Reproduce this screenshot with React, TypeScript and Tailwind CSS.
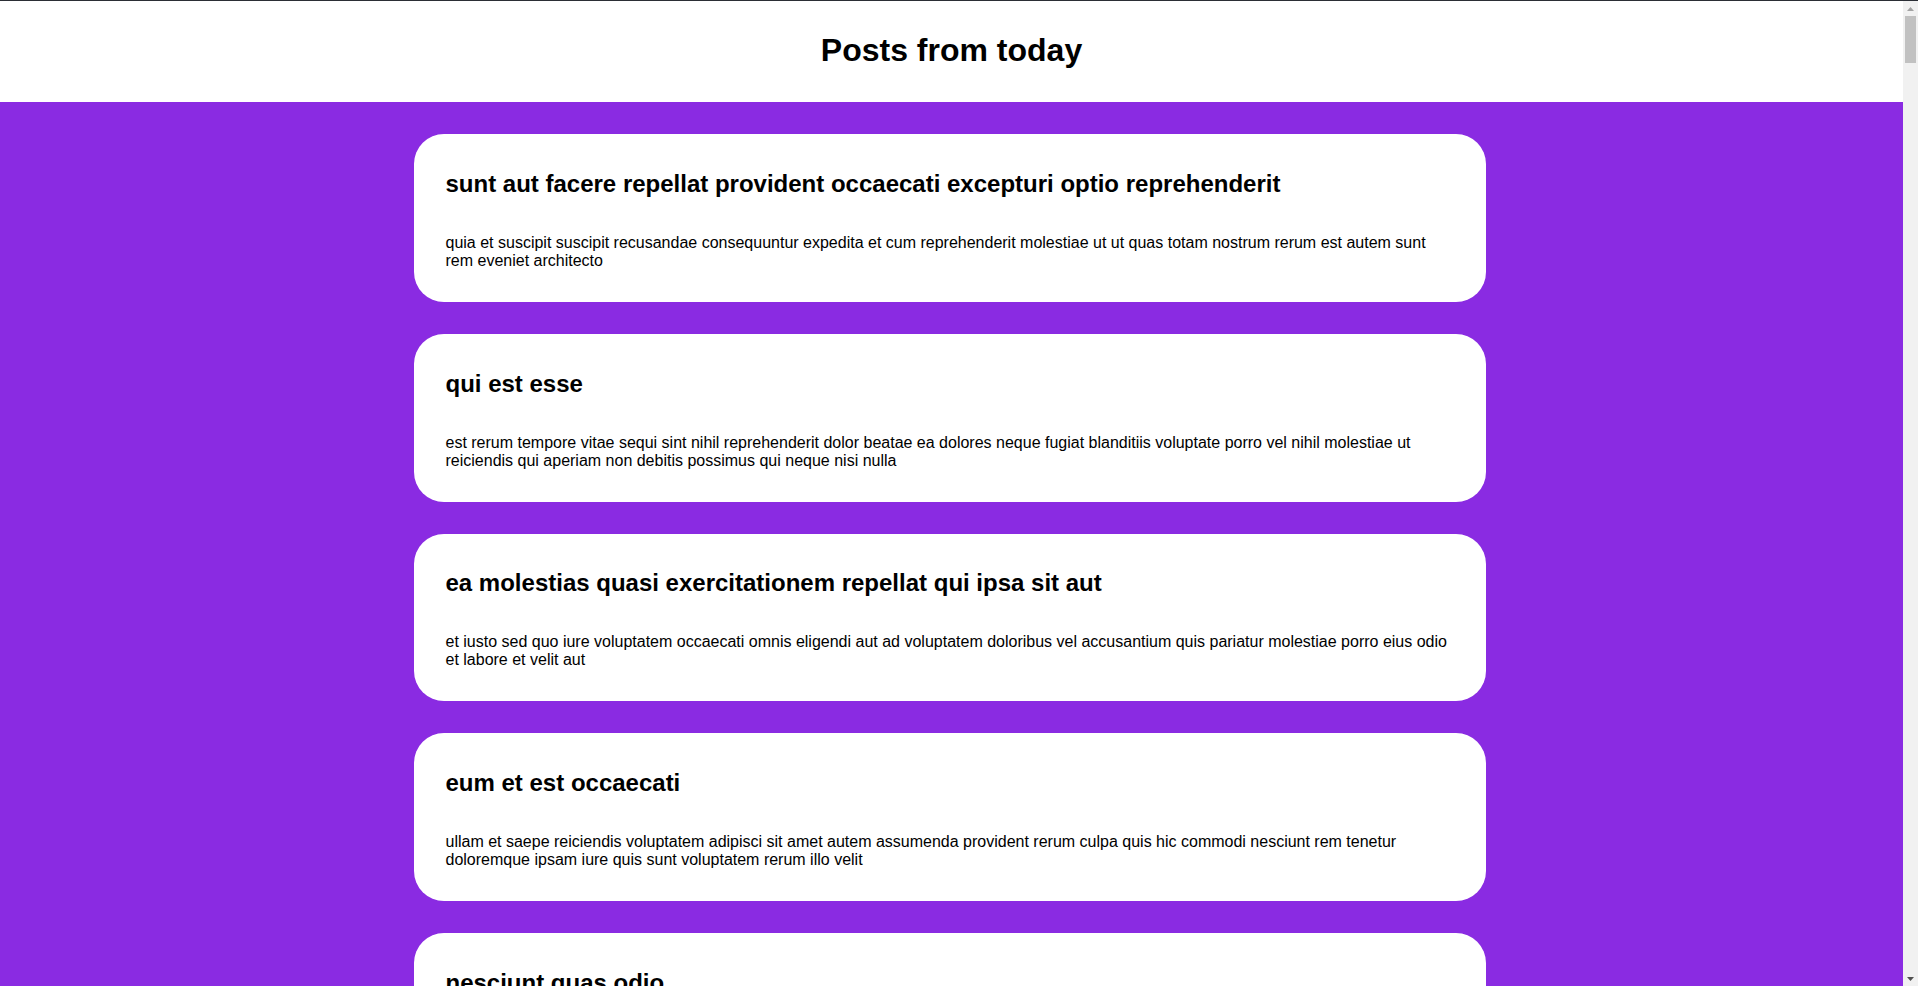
import React from "react";

const posts = [
  {
    title: "sunt aut facere repellat provident occaecati excepturi optio reprehenderit",
    body: "quia et suscipit\nsuscipit recusandae consequuntur expedita et cum\nreprehenderit molestiae ut ut quas totam\nnostrum rerum est autem sunt rem eveniet architecto",
  },
  {
    title: "qui est esse",
    body: "est rerum tempore vitae\nsequi sint nihil reprehenderit dolor beatae ea dolores neque\nfugiat blanditiis voluptate porro vel nihil molestiae ut reiciendis\nqui aperiam non debitis possimus qui neque nisi nulla",
  },
  {
    title: "ea molestias quasi exercitationem repellat qui ipsa sit aut",
    body: "et iusto sed quo iure\nvoluptatem occaecati omnis eligendi aut ad\nvoluptatem doloribus vel accusantium quis pariatur\nmolestiae porro eius odio et labore et velit aut",
  },
  {
    title: "eum et est occaecati",
    body: "ullam et saepe reiciendis voluptatem adipisci\nsit amet autem assumenda provident rerum culpa\nquis hic commodi nesciunt rem tenetur doloremque ipsam iure\nquis sunt voluptatem rerum illo velit",
  },
  {
    title: "nesciunt quas odio",
    body: "repudiandae veniam quaerat sunt sed\nalias aut fugiat sit autem sed est\nvoluptatem omnis possimus esse voluptatibus quis\nest aut tenetur dolor neque",
  },
  {
    title: "dolorem eum magni eos aperiam quia",
    body: "ut aspernatur corporis harum nihil quis provident sequi\nmollitia nobis aliquid molestiae\nperspiciatis et ea nemo ab reprehenderit accusantium quas\nvoluptate dolores velit et doloremque molestiae",
  },
  {
    title: "magnam facilis autem",
    body: "dolore placeat quibusdam ea quo vitae\nmagni quis enim qui quis quo nemo aut saepe\nquidem repellat excepturi ut quia\nsunt ut sequi eos ea sed quas",
  },
  {
    title: "dolorem dolore est ipsam",
    body: "dignissimos aperiam dolorem qui eum\nfacilis quibusdam animi sint suscipit qui sint possimus cum\nquaerat magni maiores excepturi\nipsam ut commodi dolor voluptatum modi aut vitae",
  },
  {
    title: "nesciunt iure omnis dolorem tempora et accusantium",
    body: "consectetur animi nesciunt iure dolore\nenim quia ad\nveniam autem ut quam aut nobis\net est aut quod aut provident voluptas autem voluptas",
  },
  {
    title: "optio molestias id quia eum",
    body: "quo et expedita modi cum officia vel magni\ndoloribus qui repudiandae\nvero nisi sit\nquos veniam quod sed accusamus veritatis error",
  },
];

function PostCard({ title, body }: { title: string; body: string }) {
  return (
    <article className="w-[1072px] mx-auto flex flex-col bg-white rounded-[30px] px-8 py-4 text-black">
      <h2 className="text-[24px] font-bold leading-[normal] my-[19.92px]">{title}</h2>
      <p className="text-[16px] leading-[normal] my-4">{body.replace(/\n/g, " ")}</p>
    </article>
  );
}

function Scrollbar() {
  return (
    <div className="w-[15px] shrink-0 bg-[#f1f1f1] flex flex-col items-center">
      <div className="h-[15px] w-full flex items-center justify-center">
        <svg width="7" height="4" viewBox="0 0 7 4">
          <polygon points="0,4 7,4 3.5,0" fill="#a3a3a3" />
        </svg>
      </div>
      <div className="w-[11px] h-[47px] bg-[#c1c1c1]" />
      <div className="flex-1" />
      <div className="h-[15px] w-full flex items-center justify-center">
        <svg width="7" height="4" viewBox="0 0 7 4">
          <polygon points="0,0 7,0 3.5,4" fill="#505050" />
        </svg>
      </div>
    </div>
  );
}

export default function App() {
  return (
    <div className="h-screen flex flex-col border-t border-[#2b2e35] font-['Liberation_Sans',Arial,sans-serif]">
      <div className="flex-1 min-h-0 flex">
        <div className="flex-1 min-w-0 overflow-y-auto [scrollbar-width:none] bg-[#8a2be2]">
          <header className="bg-white pt-[10px] pb-[11px]">
            <h1 className="text-center text-[32px] font-bold leading-[normal] my-[21.44px] text-black">
              Posts from today
            </h1>
          </header>
          <main className="flex flex-col gap-8 pt-8 pb-8 pr-[4px] min-h-[20030px]">
            {posts.map((p, i) => (
              <PostCard key={i} title={p.title} body={p.body} />
            ))}
          </main>
        </div>
        <Scrollbar />
      </div>
    </div>
  );
}
